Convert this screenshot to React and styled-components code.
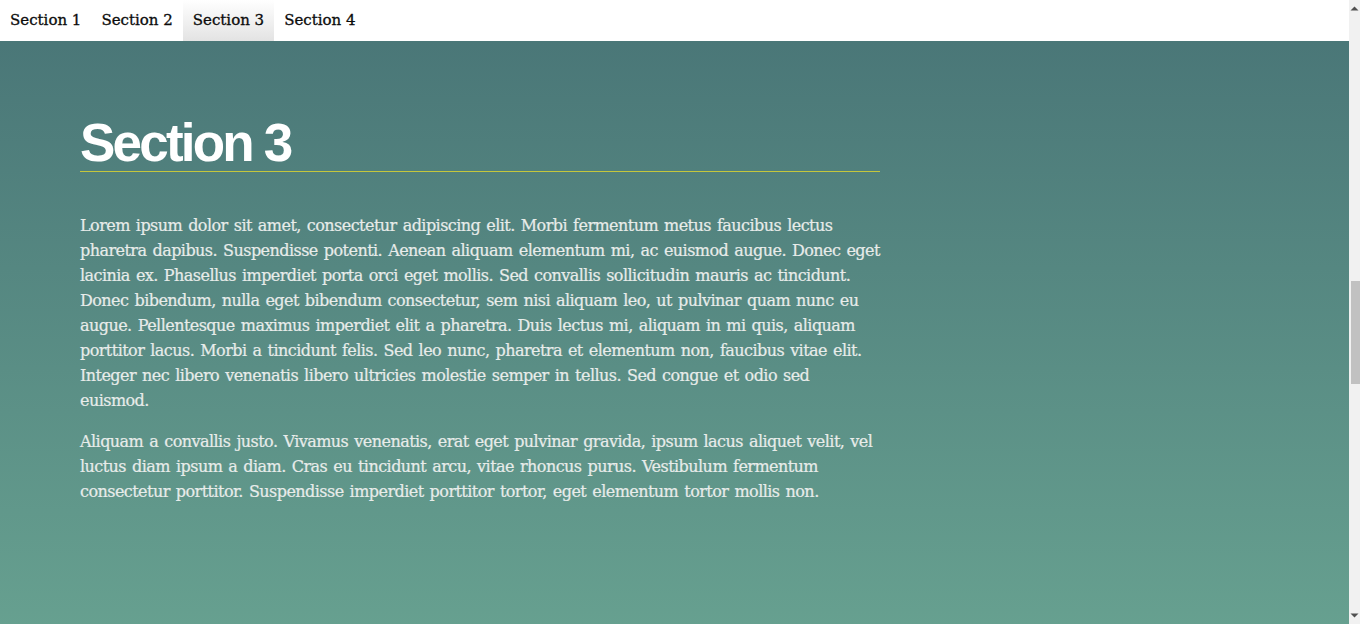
import React, { useLayoutEffect, useRef, useState } from 'react';
import styled, { createGlobalStyle } from 'styled-components';

const GlobalStyle = createGlobalStyle`
  html, body {
    margin: 0;
    height: 100%;
    overflow: hidden;
  }
  body {
    font-family: "DejaVu Serif", "Liberation Serif", serif;
  }
`;

const sections = [
  { id: 1, paragraphs: [] },
  { id: 2, paragraphs: [] },
  {
    id: 3,
    paragraphs: [
      'Lorem ipsum dolor sit amet, consectetur adipiscing elit. Morbi fermentum metus faucibus lectus pharetra dapibus. Suspendisse potenti. Aenean aliquam elementum mi, ac euismod augue. Donec eget lacinia ex. Phasellus imperdiet porta orci eget mollis. Sed convallis sollicitudin mauris ac tincidunt. Donec bibendum, nulla eget bibendum consectetur, sem nisi aliquam leo, ut pulvinar quam nunc eu augue. Pellentesque maximus imperdiet elit a pharetra. Duis lectus mi, aliquam in mi quis, aliquam porttitor lacus. Morbi a tincidunt felis. Sed leo nunc, pharetra et elementum non, faucibus vitae elit. Integer nec libero venenatis libero ultricies molestie semper in tellus. Sed congue et odio sed euismod.',
      'Aliquam a convallis justo. Vivamus venenatis, erat eget pulvinar gravida, ipsum lacus aliquet velit, vel luctus diam ipsum a diam. Cras eu tincidunt arcu, vitae rhoncus purus. Vestibulum fermentum consectetur porttitor. Suspendisse imperdiet porttitor tortor, eget elementum tortor mollis non.',
    ],
  },
  { id: 4, paragraphs: [] },
];

const ACTIVE = 3;

const App = () => {
  const scrollerRef = useRef(null);
  const activeRef = useRef(null);
  const trackRef = useRef(null);
  const [thumb, setThumb] = useState({ top: 0, height: 0 });

  useLayoutEffect(() => {
    const scroller = scrollerRef.current;
    if (!scroller || !activeRef.current) return;
    scroller.scrollTop = activeRef.current.offsetTop;
    const track = trackRef.current.clientHeight;
    setThumb({
      top: Math.round((track * scroller.scrollTop) / scroller.scrollHeight),
      height: Math.round((track * scroller.clientHeight) / scroller.scrollHeight),
    });
  }, []);

  return (
    <Frame>
      <GlobalStyle />
      <Scroller ref={scrollerRef}>
        <Nav>
          {sections.map((s) => (
            <NavItem key={s.id} href={`#section-${s.id}`} $active={s.id === ACTIVE}>
              {`Section ${s.id}`}
            </NavItem>
          ))}
        </Nav>
        <main>
          {sections.map((s) => (
            <Section
              key={s.id}
              id={`section-${s.id}`}
              ref={s.id === ACTIVE ? activeRef : null}
              $last={s.id === sections.length}
            >
              <Content>
                <Heading>{`Section ${s.id}`}</Heading>
                {s.paragraphs.map((p, i) => (
                  <Paragraph key={i}>{p}</Paragraph>
                ))}
              </Content>
            </Section>
          ))}
        </main>
      </Scroller>
      <ScrollBar>
        <ArrowButton>
          <svg width="11" height="17" viewBox="0 0 11 17">
            <path d="M1.5 10.5 L5.5 6.5 L9.5 10.5 Z" fill="#505050" />
          </svg>
        </ArrowButton>
        <Track ref={trackRef}>
          <Thumb style={{ marginTop: thumb.top, height: thumb.height }} />
        </Track>
        <ArrowButton>
          <svg width="11" height="17" viewBox="0 0 11 17">
            <path d="M1.5 6.5 L5.5 10.5 L9.5 6.5 Z" fill="#505050" />
          </svg>
        </ArrowButton>
      </ScrollBar>
    </Frame>
  );
};

export default App;

const Frame = styled.div`
  display: flex;
  height: 100vh;
`;

const Scroller = styled.div`
  flex: 1;
  overflow-y: scroll;
  scrollbar-width: none;
  &::-webkit-scrollbar {
    display: none;
  }
`;

const Nav = styled.nav`
  position: sticky;
  top: 0;
  z-index: 10;
  display: flex;
  height: 41px;
  background: #ffffff;
`;

const NavItem = styled.a`
  display: block;
  padding: 0 10px 0 10px;
  line-height: 41px;
  font-family: "DejaVu Serif", "Liberation Serif", serif;
  font-size: 15px;
  color: #0c0c0c;
  -webkit-text-stroke: 0.3px #0c0c0c;
  text-decoration: none;
  background: ${(p) => (p.$active ? 'linear-gradient(#ffffff, #e3e3e3)' : 'transparent')};
`;

const Section = styled.section`
  min-height: ${(p) => (p.$last ? '1194px' : '780px')};
  box-sizing: border-box;
  padding: 116px 0 40px 80px;
  background: linear-gradient(#487476 0px, #6eab96 780px);
`;

const Content = styled.div`
  width: 800px;
`;

const Heading = styled.h1`
  margin: 0 0 41px;
  padding-bottom: 2px;
  border-bottom: 1px solid #c4c63c;
  font-family: "Liberation Sans", Arial, sans-serif;
  font-size: 53px;
  line-height: 53px;
  letter-spacing: -2.8px;
  font-weight: bold;
  color: #ffffff;
`;

const Paragraph = styled.p`
  width: 802px;
  margin: 0 0 16px;
  font-family: "DejaVu Serif", "Liberation Serif", serif;
  font-size: 16px;
  line-height: 25px;
  letter-spacing: -0.55px;
  word-spacing: 1.5px;
  color: #e8ecea;
  -webkit-text-stroke: 0.2px #e8ecea;
`;

const ScrollBar = styled.div`
  display: flex;
  flex-direction: column;
  width: 11px;
  flex-shrink: 0;
  background: #f1f1f1;
`;

const ArrowButton = styled.div`
  height: 17px;
  flex-shrink: 0;
  svg {
    display: block;
  }
`;

const Track = styled.div`
  flex: 1;
  display: flex;
  flex-direction: column;
  align-items: flex-end;
`;

const Thumb = styled.div`
  width: 9px;
  background: #c1c1c1;
`;
